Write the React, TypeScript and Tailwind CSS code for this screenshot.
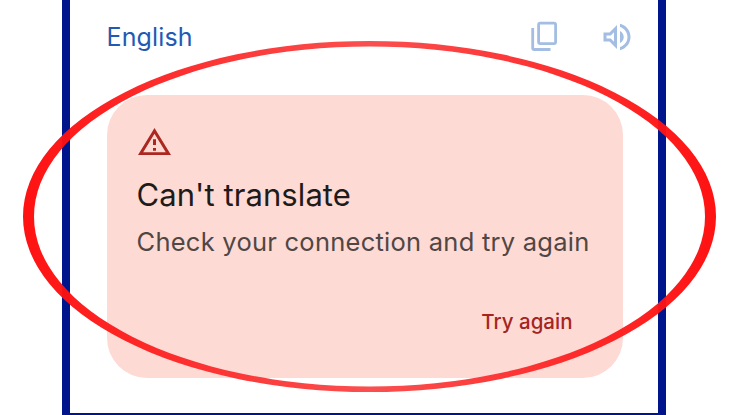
function CopyIcon() {
  return (
    <svg className="w-[26px] h-[30px]" viewBox="0 0 26 30" fill="none" stroke="#a3bde3" strokeWidth="2.8">
      <rect x="7.6" y="2.2" width="17" height="20.4" rx="1.6" />
      <path d="M1.7 7v20.3a1.2 1.2 0 0 0 1.2 1.2H19.5" />
    </svg>
  );
}

function SpeakerIcon() {
  return (
    <svg className="w-9 h-9" viewBox="0 0 24 24" fill="#a3bde3">
      <path d="M3 9v6h4l5 5V4L7 9H3zm7-.17v6.34L7.83 13H5v-2h2.83L10 8.83zM16.5 12c0-1.77-1.02-3.29-2.5-4.03v8.05c1.48-.73 2.5-2.25 2.5-4.02zM14 3.23v2.06c2.89.86 5 3.54 5 6.71s-2.11 5.85-5 6.71v2.06c4.01-.91 7-4.49 7-8.77s-2.99-7.86-7-8.77z" />
    </svg>
  );
}

function WarningIcon() {
  return (
    <svg className="w-[33px] h-[27px]" viewBox="1 2 22 19" preserveAspectRatio="none" fill="#ab271f">
      <path d="M12 5.99L19.53 19H4.47L12 5.99M12 2L1 21h22L12 2zm1 14h-2v2h2v-2zm0-6h-2v4h2v-4z" />
    </svg>
  );
}

function HighlightRing() {
  return (
    <svg className="absolute inset-0 pointer-events-none" width="739" height="415" viewBox="0 0 739 415">
      <defs>
        <linearGradient id="ring" x1="0" x2="1" y1="0" y2="0">
          <stop offset="0" stopColor="#ff0808" />
          <stop offset="0.12" stopColor="#fe1a1a" />
          <stop offset="0.5" stopColor="#fa4848" />
          <stop offset="0.88" stopColor="#fe1a1a" />
          <stop offset="1" stopColor="#ff0808" />
        </linearGradient>
      </defs>
      <path
        fill="url(#ring)"
        fillOpacity="0.96"
        fillRule="evenodd"
        d="M23 216.5a346.5 175.5 0 1 1 693 0a346.5 175.5 0 1 1 -693 0zM34 216.5a335.5 170 0 1 0 671 0a335.5 170 0 1 0 -671 0z"
      />
    </svg>
  );
}

export default function App() {
  return (
    <div className="relative w-[739px] h-[415px] overflow-hidden bg-white font-['Inter',sans-serif]">
      <div className="ml-[62px] w-[604px] h-full flex flex-col border-x-8 border-b-2 border-[#00148c] pl-[36.5px] pr-[35.5px]">
        <div className="h-[95px] flex items-start justify-between">
          <span className="mt-[19px] text-[25px] leading-9 tracking-[0.15px] text-[#1f5ab5]">English</span>
          <div className="flex items-start">
            <button className="mt-[21px] mr-[41.5px]">
              <CopyIcon />
            </button>
            <button className="mt-[19px] mr-[-12px]">
              <SpeakerIcon />
            </button>
          </div>
        </div>

        <div className="w-[516px] h-[283px] shrink-0 rounded-[40px] bg-[#fedad4] pl-[31px] pr-[50px] pt-[33px] flex flex-col items-start">
          <div className="ml-[0.5px]">
            <WarningIcon />
          </div>
          <h1 className="-ml-px mt-5 text-[31px] leading-10 whitespace-nowrap tracking-[0.08px] text-[#201a19]">
            Can't translate
          </h1>
          <p className="-ml-px mt-[9px] text-[25.5px] leading-9 whitespace-nowrap tracking-[0.25px] text-[#504745]">
            Check your connection and try again
          </p>
          <button className="mt-[48px] self-end text-[20.5px] leading-7 font-medium whitespace-nowrap text-[#a5251e]">
            Try again
          </button>
        </div>
      </div>
      <HighlightRing />
    </div>
  );
}
